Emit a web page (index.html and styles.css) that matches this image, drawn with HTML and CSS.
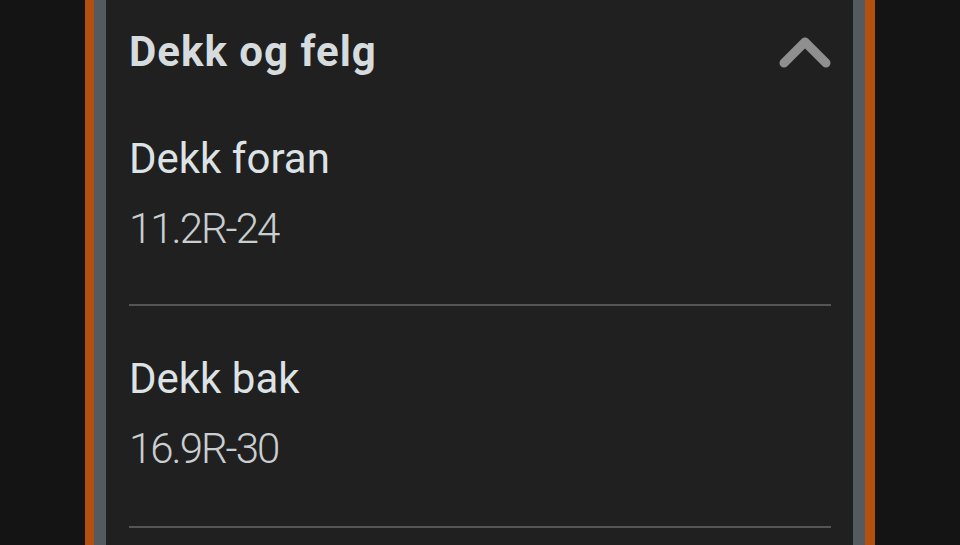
FILE: index.html
```html
<!DOCTYPE html>
<html lang="no">
<head>
<meta charset="utf-8">
<title>Dekk og felg</title>
<link rel="stylesheet" href="styles.css">
</head>
<body>
<div class="frame">
  <div class="panel">
    <div class="content">
      <div class="header">
        <h2 class="title">Dekk og felg</h2>
        <svg class="chevron" width="52" height="36" viewBox="0 0 52 36" aria-hidden="true">
          <polyline points="5,28 26,7 47,28" fill="none" stroke="#8f8f8f" stroke-width="9" stroke-linecap="round" stroke-linejoin="round"/>
        </svg>
      </div>
      <div class="item">
        <div class="label">Dekk foran</div>
        <div class="value">11.2R-24</div>
      </div>
      <div class="item">
        <div class="label">Dekk bak</div>
        <div class="value">16.9R-30</div>
      </div>
    </div>
  </div>
</div>
</body>
</html>
```

FILE: styles.css
```css
html, body {
  margin: 0;
  padding: 0;
  height: 100%;
}
body {
  background: #141414;
  overflow: hidden;
  font-family: Roboto, "Noto Sans", sans-serif;
}
.frame {
  margin-left: 85px;
  width: 790px;
  height: 100%;
  box-sizing: border-box;
  border-left: 9px solid #b4500f;
  border-right: 10px solid #b4500f;
}
.panel {
  height: 100%;
  box-sizing: border-box;
  border-left: 12px solid #535a60;
  border-right: 12px solid #535a60;
  background: #202020;
}
.content {
  padding: 0 22px 0 23px;
}
.header {
  display: flex;
  justify-content: space-between;
  align-items: center;
  height: 100px;
}
.title {
  margin: 4px 0 0;
  font-size: 42px;
  line-height: 50px;
  font-weight: 700;
  letter-spacing: 1px;
  color: #d6dbde;
}
.chevron {
  display: block;
  margin-top: 5px;
}
.item {
  padding: 48px 0 52px;
  border-bottom: 2px solid #555;
}
.header + .item {
  padding-top: 34px;
  padding-bottom: 50px;
}
.label {
  font-size: 42px;
  line-height: 50px;
  color: #dde2e5;
}
.value {
  margin-top: 20px;
  font-size: 42px;
  line-height: 50px;
  font-weight: 300;
  letter-spacing: -2px;
  color: #c9ced1;
}
```
